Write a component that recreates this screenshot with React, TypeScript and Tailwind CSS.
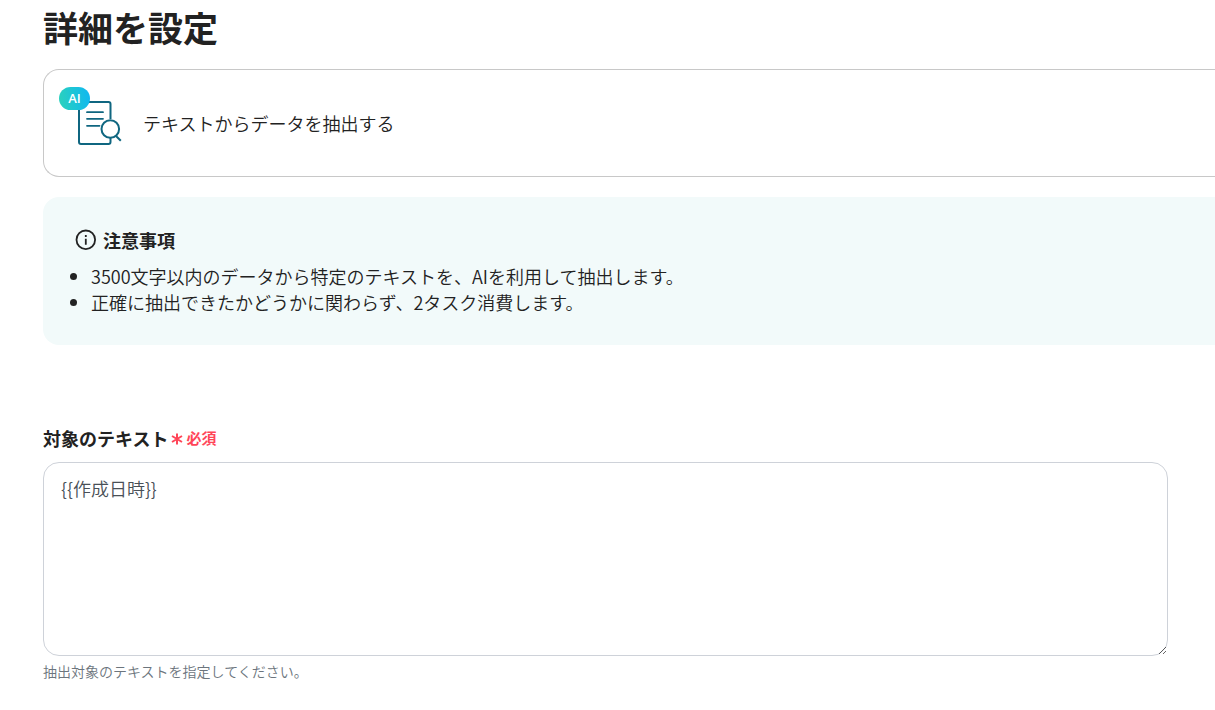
import React, { useState } from 'react';

const notes = [
  '3500文字以内のデータから特定のテキストを、AIを利用して抽出します。',
  '正確に抽出できたかどうかに関わらず、2タスク消費します。',
];

const ExtractIcon: React.FC = () => (
  <svg width="68" height="72" viewBox="0 0 68 72" fill="none" className="shrink-0" aria-hidden="true">
    <defs>
      <linearGradient id="aiBadge" x1="0" y1="14" x2="31" y2="9" gradientUnits="userSpaceOnUse">
        <stop offset="0%" stopColor="#2ad1bd" />
        <stop offset="100%" stopColor="#10b8f0" />
      </linearGradient>
    </defs>
    <g stroke="#0f6680" strokeWidth="2">
      <path d="M51.5 32V17a2 2 0 0 0-2-2H22a2 2 0 0 0-2 2v38a2 2 0 0 0 2 2h27.5a2 2 0 0 0 2-2v-4" />
      <path d="M28 25.2h16M28 31.8h16M28 38.8h12.5" strokeLinecap="round" strokeWidth="1.8" />
      <circle cx="51.3" cy="42" r="8.8" fill="#ffffff" />
      <path d="M57 49l4.8 4.8" />
    </g>
    <rect width="31" height="23" rx="11.5" fill="url(#aiBadge)" />
    <text x="15.5" y="16" textAnchor="middle" fontSize="13" fontWeight="600" fontFamily="'Open Sans', sans-serif" fill="#ffffff">
      AI
    </text>
  </svg>
);

const InfoIcon: React.FC = () => (
  <svg width="22" height="22" viewBox="0 0 22 22" fill="none" stroke="#222222" strokeWidth="1.8" aria-hidden="true">
    <circle cx="10.8" cy="10.8" r="9.3" />
    <path d="M10.8 9.8v6M10.8 6v2" />
  </svg>
);

const RequiredMark: React.FC = () => (
  <svg width="12" height="14" viewBox="0 0 12 14" stroke="#ff4558" strokeWidth="2" aria-hidden="true">
    <path d="M6 2.5v11M1 5l10 6M11 5L1 11" />
  </svg>
);

const App: React.FC = () => {
  const [text, setText] = useState('{{作成日時}}');

  return (
    <main className="overflow-hidden bg-white pb-7 pl-[43px] font-['Noto_Sans_CJK_JP',sans-serif] text-[18px] leading-[26px] font-[350] text-[#222222]">
      <h1 className="pt-[2px] text-[35px] leading-[50px] font-bold">詳細を設定</h1>

      <section className="mt-[17px] flex h-[108px] items-center gap-4 rounded-l-2xl border border-r-0 border-[#c8c8c8] pl-[15px]">
        <ExtractIcon />
        <p>テキストからデータを抽出する</p>
      </section>

      <section className="mt-5 rounded-l-2xl bg-[#f2fafa] px-8 py-[30px]">
        <h2 className="flex items-center gap-[6px] font-bold">
          <InfoIcon />
          注意事項
        </h2>
        <ul className="mt-[10px] list-disc pl-4">
          {notes.map((note) => (
            <li key={note}>{note}</li>
          ))}
        </ul>
      </section>

      <div className="mt-20 pr-[47px]">
        <label htmlFor="target-text" className="flex items-center gap-[3px] font-bold">
          対象のテキスト
          <span className="flex items-center gap-[3px] text-[15px] text-[#ff4558]">
            <RequiredMark />
            必須
          </span>
        </label>
        <textarea
          id="target-text"
          value={text}
          onChange={(e) => setText(e.target.value)}
          aria-describedby="target-help"
          className="mt-[11px] block h-[194px] w-full resize rounded-2xl border border-[#ced2d9] px-[17px] py-3 text-[#495057] outline-none"
        />
        <p id="target-help" className="mt-[5px] text-[14px] leading-5 text-[#6c757d]">
          抽出対象のテキストを指定してください。
        </p>
      </div>
    </main>
  );
};

export default App;
